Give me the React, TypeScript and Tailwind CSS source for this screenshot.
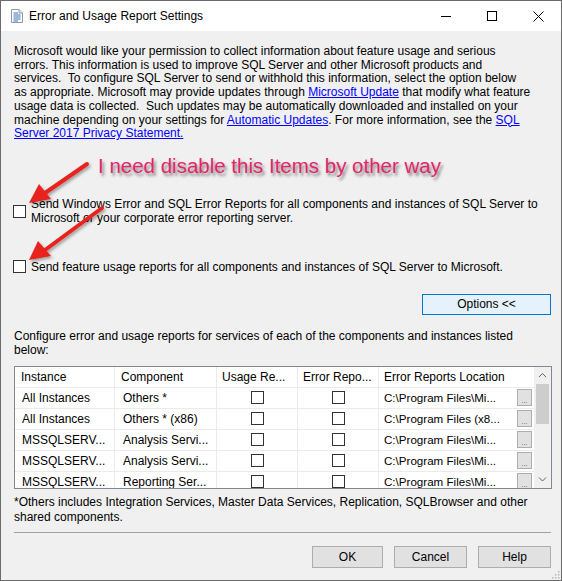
import React from 'react';

const UI = { fontFamily: '"Liberation Sans", Arial, sans-serif' };

function Box() {
  return <div className="w-[13px] h-[13px] border border-[#333] bg-white shrink-0" />;
}

function Link({ children }: { children: React.ReactNode }) {
  return <span className="text-[#0000ff] underline">{children}</span>;
}

const rows = [
  ['All Instances', 'Others *', 'C:\\Program Files\\Mi...'],
  ['All Instances', 'Others * (x86)', 'C:\\Program Files (x8...'],
  ['MSSQLSERV...', 'Analysis Servi...', 'C:\\Program Files\\Mi...'],
  ['MSSQLSERV...', 'Analysis Servi...', 'C:\\Program Files\\Mi...'],
  ['MSSQLSERV...', 'Reporting Ser...', 'C:\\Program Files\\Mi...'],
];

function TitleBar() {
  return (
    <div className="h-[30px] bg-white flex items-center shrink-0">
      {/* doc icon */}
      <svg width="12" height="14" viewBox="0 0 12 14" className="ml-[10px]">
        <path d="M0.5 0.5 H8 L11.5 4 V13.5 H0.5 Z" fill="#fff" stroke="#8a9bb0" />
        <path d="M8 0.5 V4 H11.5" fill="#dfe6ee" stroke="#8a9bb0" />
        <path d="M2.5 4 H7 M2.5 6 H9.5 M2.5 8 H9.5 M2.5 10 H9.5 M2.5 12 H7" stroke="#3b6fb6" />
      </svg>
      <span className="ml-[6px] text-[12px] text-black">Error and Usage Report Settings</span>
      <div className="ml-auto flex h-full">
        <div className="w-[46px] h-full flex items-center justify-center">
          <div className="w-[10px] h-px bg-black" />
        </div>
        <div className="w-[46px] h-full flex items-center justify-center">
          <div className="w-[10px] h-[10px] border border-black" />
        </div>
        <div className="w-[46px] h-full flex items-center justify-center">
          <svg width="11" height="11" viewBox="0 0 11 11">
            <path d="M0.5 0.5 L10.5 10.5 M10.5 0.5 L0.5 10.5" stroke="#000" strokeWidth="1" />
          </svg>
        </div>
      </div>
    </div>
  );
}

function Table() {
  const cell = 'h-[20px] flex items-center border-r border-[#ebebeb] shrink-0';
  return (
    <div className="mt-[9px] h-[123px] w-[538px] border border-[#828790] bg-white flex overflow-hidden">
      <div className="flex flex-col w-[519px]">
        <div className="flex border-b border-[#ebebeb]">
          <div className={`${cell} w-[100px] pl-[6px]`}>Instance</div>
          <div className={`${cell} w-[102px] pl-[6px]`}>Component</div>
          <div className={`${cell} w-[81px] pl-[5px]`}>Usage Re...</div>
          <div className={`${cell} w-[81px] pl-[5px]`}>Error Repo...</div>
          <div className="h-[20px] flex items-center w-[155px] pl-[5px] whitespace-nowrap">Error Reports Location</div>
        </div>
        {rows.map((r, i) => (
          <div key={i} className="flex border-b border-[#ebebeb]">
            <div className={`${cell} w-[100px] pl-[7px]`}>{r[0]}</div>
            <div className={`${cell} w-[102px] pl-[8px]`}>{r[1]}</div>
            <div className={`${cell} w-[81px] justify-center`}><Box /></div>
            <div className={`${cell} w-[81px] justify-center`}><Box /></div>
            <div className="h-[20px] flex items-center w-[155px] pl-[5px]">
              <span className="flex-1 whitespace-nowrap text-[11.6px]">{r[2]}</span>
              <div className="w-[15px] h-[17px] mr-[2px] bg-[#e1e1e1] border border-[#adadad] flex items-end justify-center text-[7px] leading-[8px] text-[#555] shrink-0">...</div>
            </div>
          </div>
        ))}
      </div>
      {/* scrollbar */}
      <div className="w-[17px] bg-[#f0f0f0] flex flex-col items-center">
        <svg width="9" height="17" viewBox="0 0 9 17" className="shrink-0">
          <path d="M1 10 L4.5 6.5 L8 10" fill="none" stroke="#606060" strokeWidth="1" />
        </svg>
        <div className="w-[13px] h-[40px] bg-[#cdcdcd] shrink-0" />
        <div className="flex-1" />
        <svg width="9" height="17" viewBox="0 0 9 17" className="shrink-0">
          <path d="M1 6.5 L4.5 10 L8 6.5" fill="none" stroke="#606060" strokeWidth="1" />
        </svg>
      </div>
    </div>
  );
}

function Btn({ children, className = '' }: { children: React.ReactNode; className?: string }) {
  return (
    <div className={`h-[22px] bg-[#e1e1e1] border border-[#adadad] flex items-center justify-center ${className}`}>
      {children}
    </div>
  );
}

export default function App() {
  return (
    <div className="w-[562px] h-[581px] border border-[#6b6b6b] flex flex-col text-[12px] text-black bg-[#f0f0f0]" style={UI}>
      <TitleBar />
      <div className="relative flex-1 flex flex-col pl-[13px] pr-[10px] pt-[14px]">
        {/* description */}
        <div className="leading-[13.7px] whitespace-nowrap">
          <div>Microsoft would like your permission to collect information about feature usage and serious</div>
          <div>errors. This information is used to improve SQL Server and other Microsoft products and</div>
          <div>services.&nbsp; To configure SQL Server to send or withhold this information, select the option below</div>
          <div>as appropriate. Microsoft may provide updates through <Link>Microsoft Update</Link> that modify what feature</div>
          <div>usage data is collected.&nbsp; Such updates may be automatically downloaded and installed on your</div>
          <div>machine depending on your settings for <Link>Automatic Updates</Link>. For more information, see the <Link>SQL</Link></div>
          <div><Link>Server 2017 Privacy Statement.</Link></div>
        </div>

        {/* annotation */}
        <div
          className="mt-[13px] ml-[84px] h-[24px] leading-[24px] text-[20.5px] text-[#e3256b] whitespace-nowrap"
          style={{ textShadow: '2px 3px 3px rgba(0,0,0,0.45)' }}
        >
          I need disable this Items by other way
        </div>

        {/* checkbox 1 */}
        <div className="mt-[19px] -ml-px flex items-center gap-[5px] leading-[14.5px]">
          <Box />
          <div className="whitespace-nowrap">
            <div>Send Windows Error and SQL Error Reports for all components and instances of SQL Server to</div>
            <div>Microsoft or your corporate error reporting server.</div>
          </div>
        </div>

        {/* checkbox 2 */}
        <div className="mt-[34px] -ml-px flex items-center gap-[5px] leading-[14px]">
          <Box />
          <div className="whitespace-nowrap">Send feature usage reports for all components and instances of SQL Server to Microsoft.</div>
        </div>

        <div className="mt-[20px] flex justify-end">
          <div className="w-[129px] h-[21px] bg-[#e5f1fb] border border-[#0078d7] flex items-center justify-center">
            Options &lt;&lt;
          </div>
        </div>

        <div className="mt-[14px] leading-[14px] whitespace-nowrap">
          <div>Configure error and usage reports for services of each of the components and instances listed</div>
          <div>below:</div>
        </div>

        <Table />

        <div className="mt-[6px] leading-[15px] whitespace-nowrap">
          <div>*Others includes Integration Services, Master Data Services, Replication, SQLBrowser and other</div>
          <div>shared components.</div>
        </div>

        <div className="mt-[7px] h-px bg-[#a0a0a0] w-[537px]" />

        <div className="mt-[13px] flex justify-end gap-[11px]">
          <Btn className="w-[71px]">OK</Btn>
          <Btn className="w-[73px]">Cancel</Btn>
          <Btn className="w-[73px]">Help</Btn>
        </div>

        {/* resize grip */}
        <svg width="10" height="10" viewBox="0 0 10 10" className="absolute right-[1px] bottom-[1px]">
          {[[8, 2], [8, 5], [5, 5], [8, 8], [5, 8], [2, 8]].map(([x, y], i) => (
            <rect key={i} x={x} y={y} width="1.5" height="1.5" fill="#b8b8b8" />
          ))}
        </svg>

        {/* red arrows overlay */}
        <svg className="absolute left-0 top-0 pointer-events-none" width="560" height="300" viewBox="0 0 560 300" style={{ overflow: 'visible' }}>
          <defs>
            <filter id="sh" x="-20%" y="-20%" width="140%" height="140%">
              <feDropShadow dx="1.5" dy="2" stdDeviation="1.5" floodColor="#000" floodOpacity="0.35" />
            </filter>
          </defs>
          <g filter="url(#sh)" fill="#e8221b" stroke="#e8221b">
            <line x1="86" y1="133" x2="44" y2="162" strokeWidth="4" strokeLinecap="round" />
            <polygon points="28,172 38,153 50,168" stroke="none" />
            <line x1="101" y1="177" x2="44" y2="219" strokeWidth="4" strokeLinecap="round" />
            <polygon points="28,229 37,210 50,225" stroke="none" />
          </g>
        </svg>
      </div>
    </div>
  );
}
